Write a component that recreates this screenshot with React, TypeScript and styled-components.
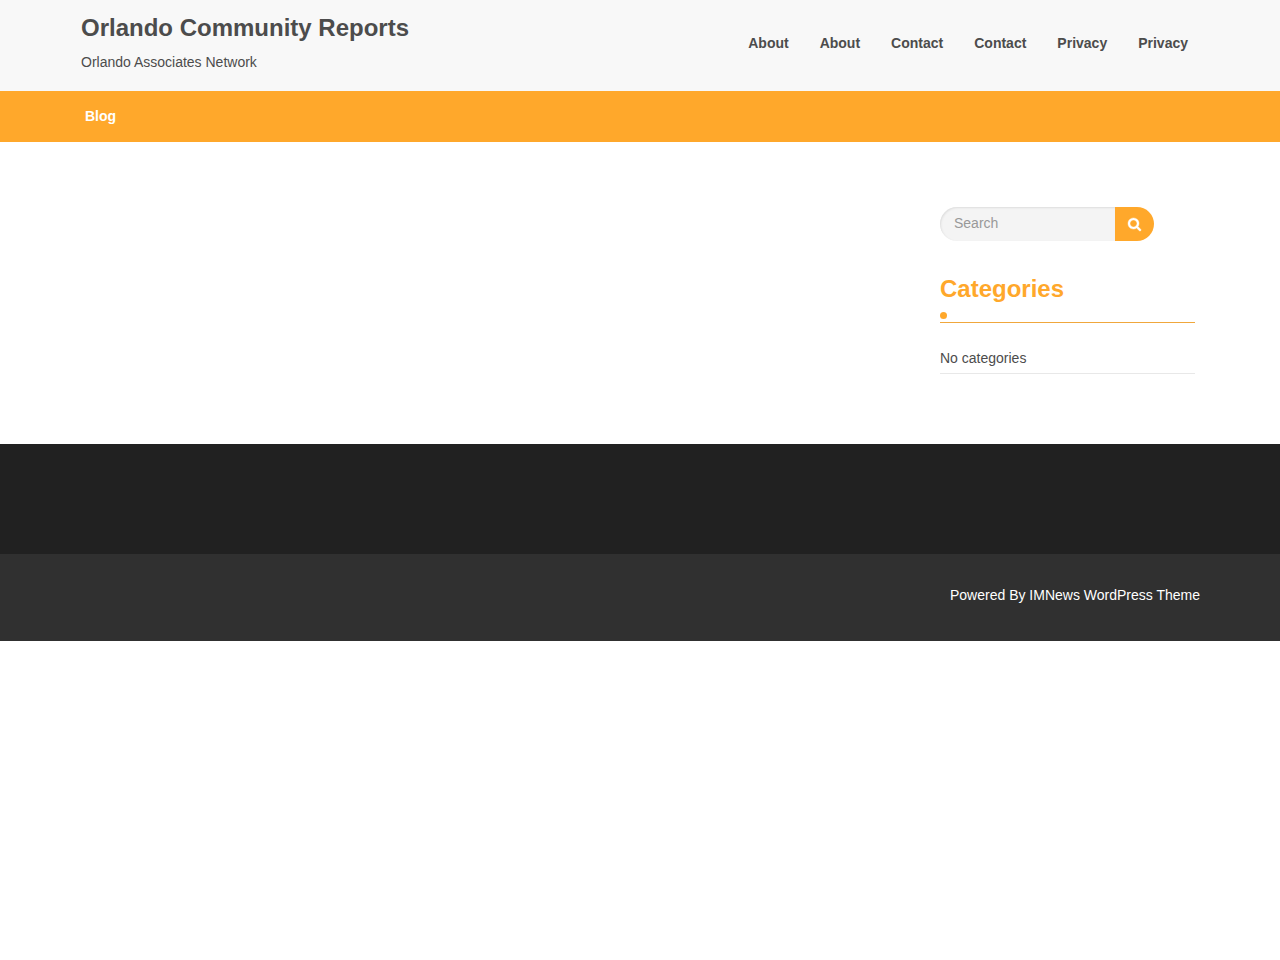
import React from "react";
import styled, { createGlobalStyle } from "styled-components";

const accent = "#ffa82b";
const ink = "#4c4c4c";

const GlobalStyle = createGlobalStyle`
  *, *::before, *::after { box-sizing: border-box; }
  body {
    margin: 0;
    background: #fff;
    color: ${ink};
    font: 14px/24px "Liberation Sans", Arial, Helvetica, sans-serif;
  }
  a { color: inherit; text-decoration: none; }
`;

const Container = styled.div`
  width: 100%;
  max-width: 1140px;
  margin: 0 auto;
  padding: 0 10px 0 11px;
`;

const TopBar = styled.header`
  background: #f8f8f8;
`;

const TopRow = styled(Container)`
  display: flex;
  flex-wrap: wrap;
  justify-content: space-between;
  padding-bottom: 17px;
`;

const SiteTitle = styled.h1`
  margin: 12px 0 6px;
  font-size: 24px;
  line-height: 32px;
`;

const Tagline = styled.p`
  margin: 0;
`;

const PageLinks = styled.nav`
  display: flex;
  flex-wrap: wrap;
  gap: 0 31px;
  padding: 31px 12px 0 0;
  font-weight: bold;
`;

const MainNav = styled.nav`
  background: ${accent};
  color: #fff;
  font-weight: bold;
  line-height: 51px;
`;

const NavLink = styled.a`
  padding: 0 4px;
`;

const Content = styled.main`
  display: flex;
  justify-content: flex-end;
  width: 100%;
  max-width: 1140px;
  margin: 0 auto;
  padding: 65px 0 70px;
`;

const Sidebar = styled.aside`
  width: 25%;
  min-width: 250px;
  padding: 0 15px;
`;

const SearchForm = styled.form`
  display: flex;
  height: 34px;
`;

const SearchInput = styled.input`
  width: 175px;
  padding: 0 14px 2px;
  border: 0;
  border-radius: 17px 0 0 17px;
  background: #f4f4f4;
  box-shadow: inset 1px 1px 2px #dedede;
  color: ${ink};
  font: inherit;
  &::placeholder { color: #999; opacity: 1; }
`;

const SearchButton = styled.button`
  display: flex;
  align-items: center;
  justify-content: center;
  width: 39px;
  padding: 0;
  border: 0;
  border-radius: 0 17px 17px 0;
  background: ${accent};
  color: #fff;
  cursor: pointer;
`;

const WidgetTitle = styled.h2`
  margin: 32px 0 23px;
  border-bottom: 1px solid #f0a73c;
  color: ${accent};
  font-size: 24px;
  line-height: 32px;
  &::after {
    content: "";
    display: block;
    width: 7px;
    height: 7px;
    margin: 7px 0 3px;
    border-radius: 50%;
    background: ${accent};
  }
`;

const CategoryList = styled.ul`
  margin: 0;
  padding: 0;
  list-style: none;
`;

const CategoryItem = styled.li`
  padding-bottom: 3px;
  border-bottom: 1px solid #e8e8e8;
`;

const FooterWidgets = styled.div`
  height: 110px;
  background: #212121;
`;

const FooterBar = styled.div`
  padding: 29px 0 34px;
  background: #303030;
  color: #fff;
  text-align: right;
`;

const pages = ["About", "About", "Contact", "Contact", "Privacy", "Privacy"];

export default function App() {
  return (
    <>
      <GlobalStyle />
      <TopBar>
        <TopRow>
          <div>
            <SiteTitle><a href="#">Orlando Community Reports</a></SiteTitle>
            <Tagline>Orlando Associates Network</Tagline>
          </div>
          <PageLinks aria-label="Pages">
            {pages.map((page, i) => (
              <a key={i} href={`#${page.toLowerCase()}`}>{page}</a>
            ))}
          </PageLinks>
        </TopRow>
      </TopBar>
      <MainNav aria-label="Main">
        <Container><NavLink href="#blog">Blog</NavLink></Container>
      </MainNav>
      <Content>
        <Sidebar>
          <SearchForm role="search" onSubmit={(e) => e.preventDefault()}>
            <SearchInput type="search" placeholder="Search" aria-label="Search" />
            <SearchButton type="submit" aria-label="Submit search">
              <svg width="13" height="13" viewBox="0 0 1664 1664" fill="currentColor" stroke="currentColor" strokeWidth="50" overflow="visible" aria-hidden="true">
                <path d="M1152 704q0-185-131.500-316.500T704 256 387.500 387.500 256 704t131.500 316.500T704 1152t316.500-131.500T1152 704zm512 832q0 52-38 90t-90 38q-54 0-90-38l-343-342q-179 124-399 124-143 0-273.500-55.500t-225-150-150-225T0 704t55.500-273.500 150-225 225-150T704 0t273.500 55.500 225 150 150 225T1408 704q0 220-124 399l343 343q37 37 37 90z" />
              </svg>
            </SearchButton>
          </SearchForm>
          <WidgetTitle>Categories</WidgetTitle>
          <CategoryList>
            <CategoryItem>No categories</CategoryItem>
          </CategoryList>
        </Sidebar>
      </Content>
      <footer>
        <FooterWidgets />
        <FooterBar>
          <Container><a href="#theme">Powered By IMNews WordPress Theme</a></Container>
        </FooterBar>
      </footer>
    </>
  );
}
